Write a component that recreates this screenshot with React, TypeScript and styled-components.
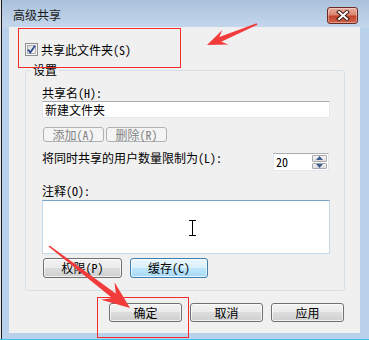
import styled, { createGlobalStyle } from 'styled-components';

const GlobalStyle = createGlobalStyle`
  html, body {
    margin: 0;
    padding: 0;
    background: #ffffff;
  }
  body {
    font-family: "Noto Sans Mono CJK SC", "Noto Sans CJK SC", sans-serif;
    font-size: 12px;
    line-height: 14px;
    color: #000;
  }
`;

const Window = styled.div`
  position: relative;
  width: 369px;
  height: 340px;
  box-sizing: border-box;
  display: flex;
  flex-direction: column;
  padding: 0 9px 6px 2px;
  background: linear-gradient(#abc1db, #c3d6ec 27px, #b9d1ea 28px);
  border-bottom: 1px solid #3ec3e6;
  box-shadow: inset 1px 0 0 #e6e6e6, inset 2px 0 0 #1d1d1d;
`;

const TitleBar = styled.div`
  height: 27px;
  display: flex;
  align-items: flex-start;
  padding-left: 11px;
`;

const Title = styled.span`
  font-family: "Noto Sans CJK SC", sans-serif;
  font-size: 12px;
  line-height: 14px;
  margin-top: 8px;
  color: #1b1b1b;
`;

const CloseButton = styled.div`
  width: 31px;
  height: 17px;
  box-sizing: border-box;
  margin: 7px 2px 0 auto;
  border: 1px solid #6b2b22;
  border-radius: 3px;
  background: linear-gradient(#eab0a0, #d98470 45%, #c2432c 55%, #d0634a);
  box-shadow: inset 0 0 0 1px rgba(255, 255, 255, 0.35);
  display: flex;
  align-items: center;
  justify-content: center;
`;

const Client = styled.div`
  flex: 1;
  margin-left: 7px;
  background: #f0f0f0;
  display: flex;
  flex-direction: column;
  padding: 16px 15px 0 16px;
`;

const CheckRow = styled.label`
  display: flex;
  align-items: center;
  gap: 3px;
  height: 13px;
  line-height: 13px;
`;

const GroupBox = styled.fieldset`
  margin: 7px 0 0;
  padding: 0;
  min-width: 0;
  border: 1px solid #d5dfe5;
  border-radius: 3px;
`;

const Legend = styled.legend`
  margin-left: 5px;
  padding: 0 2px;
  line-height: 14px;
`;

const GroupBody = styled.div`
  display: flex;
  flex-direction: column;
  padding: 9px 14px 12px 16px;
`;

const Label = styled.div<{ $top?: number }>`
  margin-top: ${(p) => p.$top ?? 0}px;
  line-height: 14px;
`;

const TextBox = styled.div`
  margin-top: 1px;
  height: 17px;
  box-sizing: border-box;
  border: 1px solid #e3e9ef;
  border-top-color: #abadb3;
  background: #fff;
  padding-left: 2px;
  line-height: 15px;
`;

const ButtonRow = styled.div<{ $top: number; $gap: number; $end?: boolean }>`
  display: flex;
  gap: ${(p) => p.$gap}px;
  margin-top: ${(p) => p.$top}px;
  justify-content: ${(p) => (p.$end ? 'flex-end' : 'flex-start')};
  padding: 0 1px;
`;

const Button = styled.button<{ $w: number; $h: number; $hot?: boolean }>`
  width: ${(p) => p.$w}px;
  height: ${(p) => p.$h}px;
  box-sizing: border-box;
  padding: 0;
  font: inherit;
  color: #000;
  border: 1px solid ${(p) => (p.$hot ? '#3c7fb1' : '#707070')};
  border-radius: 3px;
  background: ${(p) =>
    p.$hot
      ? 'linear-gradient(#eaf6fd, #d9f0fc 50%, #bee6fd 50%, #a7d9f5)'
      : 'linear-gradient(#f2f2f2, #ebebeb 50%, #dddddd 50%, #cfcfcf)'};
  box-shadow: inset 0 0 0 1px rgba(255, 255, 255, 0.7);
  display: flex;
  align-items: center;
  justify-content: center;

  &:disabled {
    border-color: #adb2b5;
    background: #f4f4f4;
    color: #838383;
    box-shadow: none;
  }
`;

const LimitRow = styled.div`
  display: flex;
  justify-content: space-between;
  align-items: flex-start;
  margin-top: 9px;
  padding-right: 1px;
`;

const Spinner = styled.div`
  margin-top: 2px;
  width: 56px;
  height: 18px;
  box-sizing: border-box;
  border: 1px solid #abadb3;
  border-color: #abadb3 #e3e9ef #e3e9ef #e3e9ef;
  background: #fff;
  display: flex;
`;

const SpinValue = styled.span`
  flex: 1;
  padding-left: 2px;
  line-height: 16px;
`;

const SpinButtons = styled.div`
  width: 15px;
  display: flex;
  flex-direction: column;
  gap: 1px;
  padding: 1px 1px 1px 0;
`;

const SpinArrow = styled.div`
  flex: 1;
  border: 1px solid #a6aab0;
  border-radius: 1px;
  background: linear-gradient(#f6f6f6, #dcdcdc);
  display: flex;
  align-items: center;
  justify-content: center;
`;

const Comment = styled.div`
  margin-top: 2px;
  height: 54px;
  box-sizing: border-box;
  border: 1px solid #c5d9ec;
  border-top-color: #7ba1c8;
  background: #fff;
`;

const Overlay = styled.svg`
  position: absolute;
  left: 0;
  top: 0;
  pointer-events: none;
`;

function arrow(x1: number, y1: number, x2: number, y2: number, head: number, half: number, tail: number, neck: number) {
  const len = Math.hypot(x2 - x1, y2 - y1);
  const ux = (x2 - x1) / len;
  const uy = (y2 - y1) / len;
  const px = -uy;
  const py = ux;
  const wx = x2 - ux * head;
  const wy = y2 - uy * head;
  const nx = x2 - ux * head * 0.72;
  const ny = y2 - uy * head * 0.72;
  const pts = [
    [x1 + (px * tail) / 2, y1 + (py * tail) / 2],
    [nx + (px * neck) / 2, ny + (py * neck) / 2],
    [wx + px * half, wy + py * half],
    [x2, y2],
    [wx - px * half, wy - py * half],
    [nx - (px * neck) / 2, ny - (py * neck) / 2],
    [x1 - (px * tail) / 2, y1 - (py * tail) / 2],
  ];
  return pts.map((p) => p.map((v) => v.toFixed(1)).join(',')).join(' ');
}

function CheckBox() {
  return (
    <svg width="13" height="13" viewBox="0 0 13 13">
      <defs>
        <linearGradient id="cb" x1="0" y1="0" x2="1" y2="1">
          <stop offset="0" stopColor="#d8d8d8" />
          <stop offset="1" stopColor="#fbfbfb" />
        </linearGradient>
      </defs>
      <rect x="0.5" y="0.5" width="12" height="12" fill="#f4f4f4" stroke="#8e8f8f" />
      <rect x="2.5" y="2.5" width="8" height="8" fill="url(#cb)" stroke="#b0b0b0" />
      <path d="M3 6.5 L5.3 9.5 L10 2.8" fill="none" stroke="#2c4a92" strokeWidth="1.8" />
    </svg>
  );
}

export default function App() {
  return (
    <>
      <GlobalStyle />
      <Window>
        <TitleBar>
          <Title>高级共享</Title>
          <CloseButton>
            <svg width="14" height="11" viewBox="0 0 14 11">
              <path d="M3 2 L11 9 M11 2 L3 9" stroke="#3b1a16" strokeWidth="4" strokeLinecap="square" />
              <path d="M3 2 L11 9 M11 2 L3 9" stroke="#ffffff" strokeWidth="2" strokeLinecap="square" />
            </svg>
          </CloseButton>
        </TitleBar>
        <Client>
          <CheckRow>
            <CheckBox />
            <span>共享此文件夹(S)</span>
          </CheckRow>
          <GroupBox>
            <Legend>设置</Legend>
            <GroupBody>
              <Label>共享名(H):</Label>
              <TextBox>新建文件夹</TextBox>
              <ButtonRow $top={9} $gap={2}>
                <Button $w={61} $h={15} disabled>添加(A)</Button>
                <Button $w={61} $h={15} disabled>删除(R)</Button>
              </ButtonRow>
              <LimitRow>
                <span>将同时共享的用户数量限制为(L):</span>
                <Spinner>
                  <SpinValue>20</SpinValue>
                  <SpinButtons>
                    <SpinArrow>
                      <svg width="7" height="4" viewBox="0 0 7 4"><path d="M0 4 L3.5 0 L7 4 Z" fill="#3d5e8c" /></svg>
                    </SpinArrow>
                    <SpinArrow>
                      <svg width="7" height="4" viewBox="0 0 7 4"><path d="M0 0 L3.5 4 L7 0 Z" fill="#3d5e8c" /></svg>
                    </SpinArrow>
                  </SpinButtons>
                </Spinner>
              </LimitRow>
              <Label $top={13}>注释(O):</Label>
              <Comment />
              <ButtonRow $top={4} $gap={8}>
                <Button $w={79} $h={20}>权限(P)</Button>
                <Button $w={78} $h={20} $hot>缓存(C)</Button>
              </ButtonRow>
            </GroupBody>
          </GroupBox>
          <ButtonRow $top={12} $gap={8} $end>
            <Button $w={73} $h={19}>确定</Button>
            <Button $w={73} $h={19}>取消</Button>
            <Button $w={73} $h={19}>应用</Button>
          </ButtonRow>
        </Client>
        <Overlay width="369" height="340" viewBox="0 0 369 340">
          <rect x="18.5" y="28.5" width="162" height="39" fill="none" stroke="#f42c2c" />
          <rect x="97.5" y="297.5" width="91" height="40" fill="none" stroke="#f42c2c" />
          <polygon points={arrow(257, 24, 207, 45, 20, 8, 1.5, 5)} fill="#f23b3b" />
          <polygon points={arrow(49, 246, 130, 308, 28, 11, 1.5, 6)} fill="#f23b3b" />
          <path d="M189 220.5 H196 M192.5 220.5 V235.5 M189 235.5 H196" stroke="#000" strokeWidth="1" fill="none" />
        </Overlay>
      </Window>
    </>
  );
}
